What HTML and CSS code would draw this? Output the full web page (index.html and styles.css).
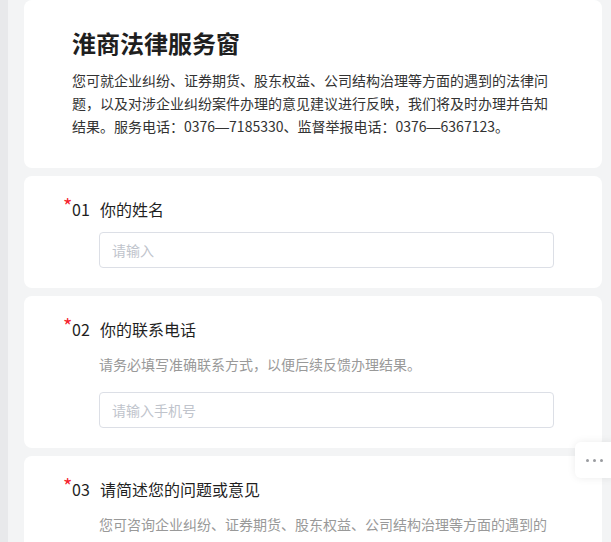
FILE: index.html
```html
<!DOCTYPE html>
<html lang="zh-CN">
<head>
<meta charset="utf-8">
<title>淮商法律服务窗</title>
<link rel="stylesheet" href="styles.css">
</head>
<body>
<div class="page">
  <div class="strip"></div>
  <main class="main">
    <section class="card intro">
      <h1 class="title">淮商法律服务窗</h1>
      <p class="intro-text">您可就企业纠纷、证券期货、股东权益、公司结构治理等方面的遇到的法律问题，以及对涉企业纠纷案件办理的意见建议进行反映，我们将及时办理并告知结果。服务电话：0376<span class="dash">—</span>7185330、监督举报电话：0376<span class="dash">—</span>6367123。</p>
    </section>

    <section class="card question">
      <div class="q-head"><span class="req">*</span><span class="q-num">01</span><span class="q-label">你的姓名</span></div>
      <div class="q-body">
        <input class="field" type="text" placeholder="请输入">
      </div>
    </section>

    <section class="card question">
      <div class="q-head"><span class="req">*</span><span class="q-num">02</span><span class="q-label">你的联系电话</span></div>
      <div class="q-body">
        <p class="q-desc">请务必填写准确联系方式，以便后续反馈办理结果。</p>
        <input class="field" type="text" placeholder="请输入手机号">
      </div>
    </section>

    <section class="card question">
      <div class="q-head"><span class="req">*</span><span class="q-num">03</span><span class="q-label">请简述您的问题或意见</span></div>
      <div class="q-body">
        <p class="q-desc">您可咨询企业纠纷、证券期货、股东权益、公司结构治理等方面的遇到的法律问题，以及对涉企业纠纷案件办理的意见建议。</p>
        <textarea class="field area" placeholder="请输入"></textarea>
      </div>
    </section>
  </main>
</div>
<div class="float-btn"><span class="dot"></span><span class="dot"></span><span class="dot"></span></div>
</body>
</html>
```

FILE: styles.css
```css
html, body {
  margin: 0;
  padding: 0;
  height: 100%;
  overflow: hidden;
}
body {
  background: #f3f4f5;
  font-family: "Noto Sans CJK SC", "Noto Sans", sans-serif;
  color: #1f1f1f;
}
.page {
  display: flex;
  height: 100vh;
  overflow: hidden;
}
.strip {
  width: 8px;
  flex: none;
  background: #e8e9eb;
}
.main {
  width: 578px;
  margin-left: 16px;
  display: flex;
  flex-direction: column;
  gap: 8px;
  flex: none;
}
.card {
  background: #ffffff;
  border-radius: 8px;
  padding: 0 48px;
}
.intro {
  padding-top: 26.5px;
  padding-bottom: 29px;
}
.title {
  margin: 0;
  font-size: 24px;
  line-height: 32px;
  font-weight: 700;
  color: #1f1f1f;
}
.intro-text {
  margin: 10px 0 0;
  font-size: 14px;
  line-height: 23.3px;
  color: #333333;
}
.dash {
  font-family: "Liberation Sans", sans-serif;
}
.question {
  padding-top: 21px;
  padding-bottom: 20px;
}
.q-head {
  position: relative;
  display: flex;
  align-items: center;
  font-size: 16px;
  line-height: 24px;
  color: #1f1f1f;
}
.req {
  position: absolute;
  left: -9px;
  top: -1px;
  color: #f5222d;
  font-size: 20px;
  line-height: 20px;
}
.q-num {
  width: 28px;
  flex: none;
}
.q-body {
  margin-left: 27px;
  padding-top: 11px;
}
.q-desc {
  margin: 0 0 16px;
  font-size: 14px;
  line-height: 24px;
  color: #999999;
}
.field {
  display: block;
  box-sizing: border-box;
  width: 100%;
  height: 36px;
  margin: 0;
  padding: 0 12px;
  border: 1px solid #dcdfe6;
  border-radius: 4px;
  background: #ffffff;
  font-family: "Noto Sans CJK SC", "Noto Sans", sans-serif;
  font-size: 14px;
  color: #333333;
  outline: none;
}
.field::placeholder {
  color: #c0c4cc;
}
.area {
  height: 90px;
  padding-top: 8px;
  resize: none;
}
.float-btn {
  position: fixed;
  left: 575px;
  top: 442px;
  width: 42px;
  height: 36px;
  box-sizing: border-box;
  padding-left: 11px;
  background: #ffffff;
  border-radius: 6px;
  box-shadow: 0 0 8px rgba(0, 0, 0, 0.08);
  display: flex;
  align-items: center;
  gap: 4px;
}
.dot {
  width: 3px;
  height: 3px;
  border-radius: 50%;
  background: #9a9ca0;
}
```
